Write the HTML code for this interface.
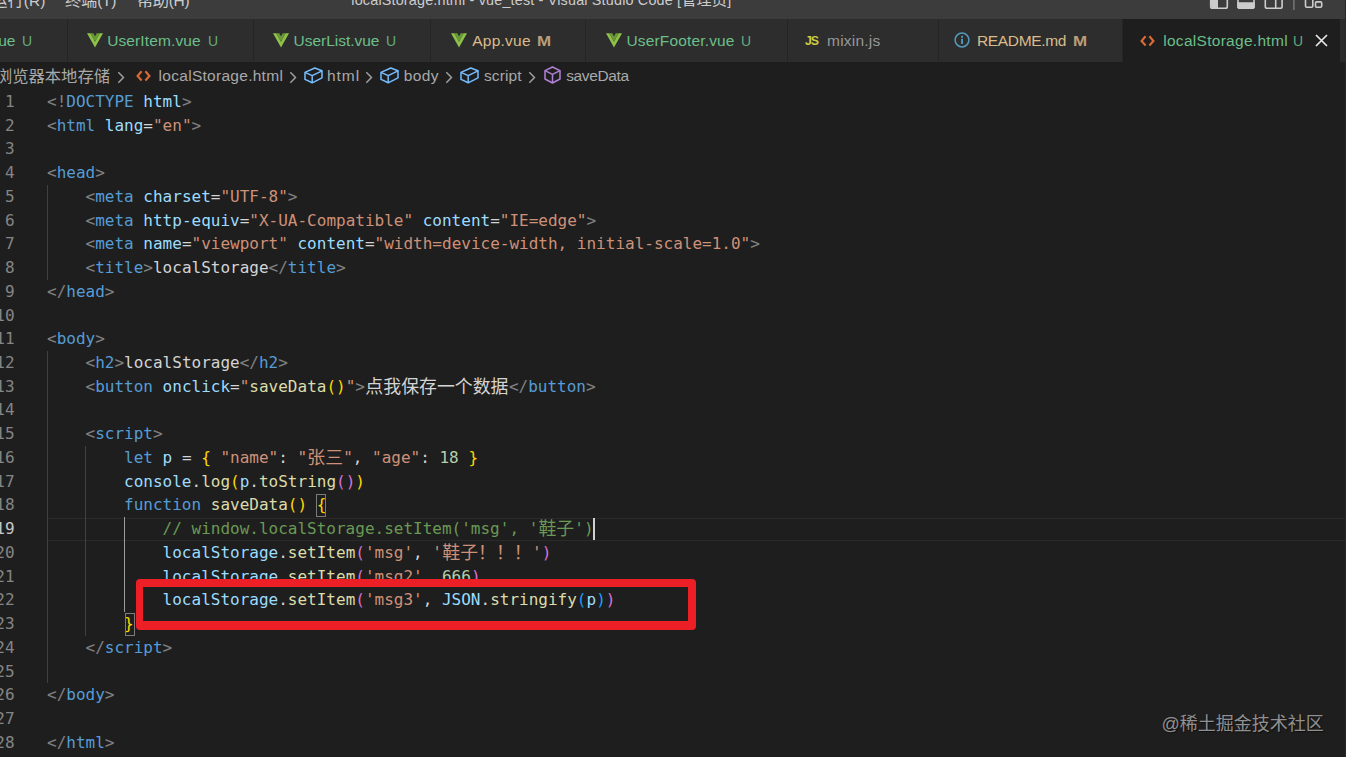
<!DOCTYPE html>
<html lang="zh-CN">
<head>
<meta charset="UTF-8">
<title>localStorage.html - vue_test - Visual Studio Code</title>
<style>
*{box-sizing:border-box}
html,body{margin:0;padding:0}
body{width:1346px;height:757px;overflow:hidden;background:#1e1e1e;position:relative;
 font-family:"Liberation Sans","Noto Sans CJK SC",sans-serif;color:#d4d4d4}
.abs{position:absolute}
i.k{font-style:normal;font-size:1.052em}
#bc i.k{position:relative;top:0.8px}
/* title bar */
#title{position:absolute;left:0;top:0;width:1346px;height:18.5px;background:#3c3c3c;overflow:hidden}
#title span{position:absolute;top:-11.2px;line-height:22px;font-size:15.5px;color:#cccccc;white-space:nowrap}
#title span.tt{font-size:14.4px;top:-11.2px}
/* tabs */
#tabs{position:absolute;left:0;top:18.5px;width:1340px;height:43px;background:#252526}
#tabstrip{position:absolute;left:1340px;top:18.5px;width:6px;height:43px;background:#2b2b2b}
.tab{position:absolute;top:0;height:43px;background:#2d2d2d;border-right:1px solid #252526}
.tab.on{background:#1e1e1e;border-right:none}
.tab span{position:absolute;top:-0.1px;line-height:45px;font-size:15.5px;white-space:nowrap}
.tab span.js{color:#cbcb41;font-weight:bold;font-size:12.4px;line-height:46px}
.U{color:#6cbf8a}.M{color:#dcbb8a}.N{color:#979797}
.tab span.st{font-size:15.5px;opacity:.88;transform:scaleX(.9);transform-origin:0 50%}
.tab span.M.st{font-size:15px;font-weight:bold;opacity:.8;transform:scaleX(1.13);top:-0.4px}
.tab svg{position:absolute}
/* breadcrumb */
#bc{position:absolute;left:0;top:62px;width:1346px;height:27px}
#bc span{position:absolute;top:-1px;line-height:29px;font-size:15.5px;color:#a9a9a9;white-space:nowrap}
#bc svg{position:absolute}
/* editor */
.ln,.cl{position:absolute;height:23.73px;line-height:23.73px;white-space:pre;
 font-family:"DejaVu Sans Mono","Liberation Mono","Noto Sans CJK SC",monospace;font-size:16px;letter-spacing:0}
.ln{left:-30px;width:44.6px;text-align:right;color:#858585}
.ln.act{color:#c6c6c6}
.cl{left:47.00px;color:#d4d4d4}
.cj{display:inline-block;text-align:center;letter-spacing:0;font-size:17.9px;line-height:1;vertical-align:baseline;position:relative;top:0.8px;font-family:"Noto Sans CJK SC",sans-serif}
.ig{position:absolute;width:1px;background:#404040}
.iga{background:#9c9c9c}
.g{color:#808080}
.t{color:#569cd6}
.a{color:#9cdcfe}
.s{color:#ce9178}
.w{color:#d4d4d4}
.f{color:#dcdcaa}
.n{color:#b5cea8}
.c{color:#6a9955}
.y{color:#ffd700}
.p{color:#da70d6}
.b{color:#179fff}
#curline{position:absolute;left:47px;top:518px;width:1299px;height:22.9px;border-top:1.6px solid #2a2a2a;border-bottom:1.6px solid #2a2a2a}
#cursor{position:absolute;width:2px;background:#d0d0d0}
.bm{position:absolute;border:1px solid #7c7c7c}
#red{position:absolute;left:135.5px;top:579px;width:560.8px;height:51.3px;border:solid #ec1f27;border-width:8.3px 8.7px 9px 7.5px;border-radius:4px}
#wm{position:absolute;left:1161.6px;top:710.4px;font-size:18px;line-height:28px;color:#909090;text-shadow:1px 1px 1px rgba(0,0,0,.55);white-space:nowrap;font-family:"Liberation Sans","Noto Sans CJK SC",sans-serif}
</style>
</head>
<body>
<div id="title">
<span id="m0" class="" style="left:-8.80px;letter-spacing:0.000px"><i class="k">运行</i>(R)</span>
<span id="m1" class="" style="left:65.00px;letter-spacing:-0.225px"><i class="k">终端</i>(T)</span>
<span id="m2" class="" style="left:136.90px;letter-spacing:-0.360px"><i class="k">帮助</i>(H)</span>
<span id="m3" class="tt" style="left:351.30px;letter-spacing:0.170px">localStorage.html - vue_test - Visual Studio Code [<i class="k">管理员</i>]</span>
 <svg class="abs" style="left:1205px;top:-8px" width="125" height="20" viewBox="0 0 125 20">
  <g fill="none" stroke="#cccccc" stroke-width="1.6">
   <rect x="5.7" y="1.8" width="16.6" height="14.4" rx="1.8"/>
   <rect x="33" y="1.8" width="16" height="14.4" rx="1.8"/>
   <rect x="60.3" y="1.8" width="16.8" height="14.4" rx="1.8"/>
   <path d="M70.7 2v14" />
   <path d="M88.9 4v14" stroke="#8a8a8a" stroke-width="1.1"/>
   <rect x="100.5" y="1.8" width="7.3" height="13.4" rx="1.2"/>
   <rect x="110.5" y="9.9" width="6.2" height="5.3" rx="1.2"/>
  </g>
  <path d="M5 2h8v15H6.5z" fill="#cccccc"/>
  <path d="M32.3 10.2h17.4v5.3l-1.5 1.5H33.8l-1.5-1.5z" fill="#cccccc"/>
 </svg>
</div>
<div id="tabs">
<div class="tab" style="left:0.0px;width:67.5px"><span id="t0" class="U" style="left:-1.80px;letter-spacing:0.000px">ue</span><span id="s0" class="U st" style="left:21.90px;letter-spacing:0.000px">U</span></div>
<div class="tab" style="left:67.5px;width:186.0px"><svg style="left:19.5px;top:14.5px" width="16" height="14.6" viewBox="0 0 16 14" preserveAspectRatio="none"><path d="M0 0.3h3.4L8 8.4 12.6 0.3H16L8 13.8z" fill="#8dc149"/><path d="M3.4 0.3h2.9L8 3.4 9.7 0.3h2.9L8 8.4z" fill="#6a9a35"/></svg><span id="t1" class="U" style="left:39.70px;letter-spacing:0.115px">UserItem.vue</span><span id="s1" class="U st" style="left:140.30px;letter-spacing:0.000px">U</span></div>
<div class="tab" style="left:253.5px;width:177.0px"><svg style="left:19.8px;top:14.5px" width="16" height="14.6" viewBox="0 0 16 14" preserveAspectRatio="none"><path d="M0 0.3h3.4L8 8.4 12.6 0.3H16L8 13.8z" fill="#8dc149"/><path d="M3.4 0.3h2.9L8 3.4 9.7 0.3h2.9L8 8.4z" fill="#6a9a35"/></svg><span id="t2" class="U" style="left:40.00px;letter-spacing:-0.016px">UserList.vue</span><span id="s2" class="U st" style="left:132.20px;letter-spacing:0.000px">U</span></div>
<div class="tab" style="left:430.5px;width:155.5px"><svg style="left:20.5px;top:14.5px" width="16" height="14.6" viewBox="0 0 16 14" preserveAspectRatio="none"><path d="M0 0.3h3.4L8 8.4 12.6 0.3H16L8 13.8z" fill="#8dc149"/><path d="M3.4 0.3h2.9L8 3.4 9.7 0.3h2.9L8 8.4z" fill="#6a9a35"/></svg><span id="t3" class="M" style="left:41.70px;letter-spacing:0.240px">App.vue</span><span id="s3" class="M st" style="left:106.00px;letter-spacing:0.000px">M</span></div>
<div class="tab" style="left:586.0px;width:201.5px"><svg style="left:20.2px;top:14.5px" width="16" height="14.6" viewBox="0 0 16 14" preserveAspectRatio="none"><path d="M0 0.3h3.4L8 8.4 12.6 0.3H16L8 13.8z" fill="#8dc149"/><path d="M3.4 0.3h2.9L8 3.4 9.7 0.3h2.9L8 8.4z" fill="#6a9a35"/></svg><span id="t4" class="U" style="left:40.50px;letter-spacing:0.152px">UserFooter.vue</span><span id="s4" class="U st" style="left:155.40px;letter-spacing:0.000px">U</span></div>
<div class="tab" style="left:787.5px;width:151.5px"><span id="tjs" class="js" style="left:17.40px;letter-spacing:-1.000px">JS</span><span id="t5" class="N" style="left:39.60px;letter-spacing:0.206px">mixin.js</span></div>
<div class="tab" style="left:939.0px;width:184.0px"><svg style="left:14.6px;top:13.5px" width="16" height="16" viewBox="0 0 16 16"><circle cx="8" cy="8" r="6.9" fill="none" stroke="#519aba" stroke-width="1.5"/><rect x="7.1" y="6.8" width="1.9" height="5.2" fill="#519aba"/><rect x="7.1" y="3.8" width="1.9" height="1.9" fill="#519aba"/></svg><span id="t6" class="M" style="left:38.00px;letter-spacing:-0.338px">README.md</span><span id="s6" class="M st" style="left:134.00px;letter-spacing:0.000px">M</span></div>
<div class="tab on" style="left:1123.0px;width:217.0px"><svg style="left:17.1px;top:16.5px" width="15" height="11.8" viewBox="0 0 15 11" preserveAspectRatio="none"><path d="M5.6 1.2L1.6 5.5l4 4.3M9.4 1.2l4 4.3-4 4.3" fill="none" stroke="#dd6a35" stroke-width="2.1"/></svg><span id="t7" class="U" style="left:40.20px;letter-spacing:0.292px">localStorage.html</span><span id="s7" class="U st" style="left:170.30px;letter-spacing:0.000px">U</span><svg style="left:192.0px;top:15.2px" width="13" height="13" viewBox="0 0 13 13"><path d="M1 1l11 11M12 1L1 12" fill="none" stroke="#e8e8e8" stroke-width="1.7"/></svg></div>
</div>
<div id="tabstrip"></div>
<div class="abs" style="left:1344.6px;top:0;width:1.4px;height:757px;background:#282828;z-index:5"></div>
<div id="bc">
<span id="b0" class="" style="left:-4.10px;letter-spacing:0.000px"><i class="k">浏览器本地存储</i></span>
<svg style="left:116.9px;top:8.5px" width="9" height="13" viewBox="0 0 9 13"><path d="M1.3 1.2l5.2 5.3-5.2 5.3" fill="none" stroke="#a0a0a0" stroke-width="1.45"/></svg>
<svg style="left:135.8px;top:8.0px" width="15" height="11.8" viewBox="0 0 15 11" preserveAspectRatio="none"><path d="M5.6 1.2L1.6 5.5l4 4.3M9.4 1.2l4 4.3-4 4.3" fill="none" stroke="#dd6a35" stroke-width="2.1"/></svg>
<span id="b1" class="" style="left:158.60px;letter-spacing:0.281px">localStorage.html</span>
<svg style="left:288.9px;top:8.5px" width="9" height="13" viewBox="0 0 9 13"><path d="M1.3 1.2l5.2 5.3-5.2 5.3" fill="none" stroke="#a0a0a0" stroke-width="1.45"/></svg>
<svg style="left:303.7px;top:4.5px" width="19" height="17" viewBox="0 0 19 17"><g fill="none" stroke="#75beff" stroke-width="1.5" stroke-linejoin="round"><path d="M1 5.4L10.8 1 18 3.8v7L8.2 15.8 1 12.4z"/><path d="M1 5.4l7.2 3.2L18 3.8M8.2 8.6v7.2"/></g></svg>
<span id="b2" class="" style="left:327.10px;letter-spacing:0.900px">html</span>
<svg style="left:364.9px;top:8.5px" width="9" height="13" viewBox="0 0 9 13"><path d="M1.3 1.2l5.2 5.3-5.2 5.3" fill="none" stroke="#a0a0a0" stroke-width="1.45"/></svg>
<svg style="left:380.0px;top:4.5px" width="19" height="17" viewBox="0 0 19 17"><g fill="none" stroke="#75beff" stroke-width="1.5" stroke-linejoin="round"><path d="M1 5.4L10.8 1 18 3.8v7L8.2 15.8 1 12.4z"/><path d="M1 5.4l7.2 3.2L18 3.8M8.2 8.6v7.2"/></g></svg>
<span id="b3" class="" style="left:403.70px;letter-spacing:0.420px">body</span>
<svg style="left:444.9px;top:8.5px" width="9" height="13" viewBox="0 0 9 13"><path d="M1.3 1.2l5.2 5.3-5.2 5.3" fill="none" stroke="#a0a0a0" stroke-width="1.45"/></svg>
<svg style="left:460.3px;top:4.5px" width="19" height="17" viewBox="0 0 19 17"><g fill="none" stroke="#75beff" stroke-width="1.5" stroke-linejoin="round"><path d="M1 5.4L10.8 1 18 3.8v7L8.2 15.8 1 12.4z"/><path d="M1 5.4l7.2 3.2L18 3.8M8.2 8.6v7.2"/></g></svg>
<span id="b4" class="" style="left:484.00px;letter-spacing:0.108px">script</span>
<svg style="left:527.9px;top:8.5px" width="9" height="13" viewBox="0 0 9 13"><path d="M1.3 1.2l5.2 5.3-5.2 5.3" fill="none" stroke="#a0a0a0" stroke-width="1.45"/></svg>
<svg style="left:543.7px;top:3.5px" width="17" height="18" viewBox="0 0 17 18"><g fill="none" stroke="#b180d7" stroke-width="1.5" stroke-linejoin="round"><path d="M8.5 1L16 4.6v8.4L8.5 17 1 13V4.6z"/><path d="M1 4.6l7.5 3.8 7.5-3.8M8.5 8.4V17"/></g></svg>
<span id="b5" class="" style="left:566.20px;letter-spacing:-0.360px">saveData</span>
</div>
<div id="curline"></div>
<div class="ig" style="left:47.0px;top:184.9px;height:94.9px"></div>
<div class="ig" style="left:47.0px;top:351.0px;height:332.2px"></div>
<div class="ig" style="left:85.1px;top:445.9px;height:189.8px"></div>
<div class="ig iga" style="left:124.0px;top:517.1px;height:94.9px"></div>
<div class="ln" style="top:90.00px">1</div>
<div class="cl" style="top:90.00px"><span class="g">&lt;!</span><span class="t">DOCTYPE</span> <span class="a">html</span><span class="g">&gt;</span></div>
<div class="ln" style="top:113.73px">2</div>
<div class="cl" style="top:113.73px"><span class="g">&lt;</span><span class="t">html</span> <span class="a">lang</span>=<span class="s">&quot;en&quot;</span><span class="g">&gt;</span></div>
<div class="ln" style="top:137.46px">3</div>
<div class="ln" style="top:161.19px">4</div>
<div class="cl" style="top:161.19px"><span class="g">&lt;</span><span class="t">head</span><span class="g">&gt;</span></div>
<div class="ln" style="top:184.92px">5</div>
<div class="cl" style="top:184.92px">    <span class="g">&lt;</span><span class="t">meta</span> <span class="a">charset</span>=<span class="s">&quot;UTF-8&quot;</span><span class="g">&gt;</span></div>
<div class="ln" style="top:208.65px">6</div>
<div class="cl" style="top:208.65px">    <span class="g">&lt;</span><span class="t">meta</span> <span class="a">http-equiv</span>=<span class="s">&quot;X-UA-Compatible&quot;</span> <span class="a">content</span>=<span class="s">&quot;IE=edge&quot;</span><span class="g">&gt;</span></div>
<div class="ln" style="top:232.38px">7</div>
<div class="cl" style="top:232.38px">    <span class="g">&lt;</span><span class="t">meta</span> <span class="a">name</span>=<span class="s">&quot;viewport&quot;</span> <span class="a">content</span>=<span class="s">&quot;width=device-width, initial-scale=1.0&quot;</span><span class="g">&gt;</span></div>
<div class="ln" style="top:256.11px">8</div>
<div class="cl" style="top:256.11px">    <span class="g">&lt;</span><span class="t">title</span><span class="g">&gt;</span>localStorage<span class="g">&lt;/</span><span class="t">title</span><span class="g">&gt;</span></div>
<div class="ln" style="top:279.84px">9</div>
<div class="cl" style="top:279.84px"><span class="g">&lt;/</span><span class="t">head</span><span class="g">&gt;</span></div>
<div class="ln" style="top:303.57px">10</div>
<div class="ln" style="top:327.30px">11</div>
<div class="cl" style="top:327.30px"><span class="g">&lt;</span><span class="t">body</span><span class="g">&gt;</span></div>
<div class="ln" style="top:351.03px">12</div>
<div class="cl" style="top:351.03px">    <span class="g">&lt;</span><span class="t">h2</span><span class="g">&gt;</span>localStorage<span class="g">&lt;/</span><span class="t">h2</span><span class="g">&gt;</span></div>
<div class="ln" style="top:374.76px">13</div>
<div class="cl" style="top:374.76px">    <span class="g">&lt;</span><span class="t">button</span> <span class="a">onclick</span>=<span class="s">&quot;</span><span class="f">saveData</span><span class="y">()</span><span class="s">&quot;</span><span class="g">&gt;</span><span class="w"><span class="cj" style="width:144.00px">点我保存一个数据</span></span><span class="g">&lt;/</span><span class="t">button</span><span class="g">&gt;</span></div>
<div class="ln" style="top:398.49px">14</div>
<div class="ln" style="top:422.22px">15</div>
<div class="cl" style="top:422.22px">    <span class="g">&lt;</span><span class="t">script</span><span class="g">&gt;</span></div>
<div class="ln" style="top:445.95px">16</div>
<div class="cl" style="top:445.95px">        <span class="t">let</span> <span class="a">p</span> = <span class="y">{</span> <span class="s">&quot;name&quot;</span>: <span class="s">&quot;<span class="cj" style="width:36.00px">张三</span>&quot;</span>, <span class="s">&quot;age&quot;</span>: <span class="n">18</span> <span class="y">}</span></div>
<div class="ln" style="top:469.68px">17</div>
<div class="cl" style="top:469.68px">        <span class="a">console</span>.<span class="f">log</span><span class="y">(</span><span class="a">p</span>.<span class="f">toString</span><span class="p">()</span><span class="y">)</span></div>
<div class="ln" style="top:493.41px">18</div>
<div class="cl" style="top:493.41px">        <span class="t">function</span> <span class="f">saveData</span><span class="y">()</span> <span class="y">{</span></div>
<div class="ln act" style="top:517.14px">19</div>
<div class="cl" style="top:517.14px">            <span class="c">// window.localStorage.setItem(&#x27;msg&#x27;, &#x27;<span class="cj" style="width:36.00px">鞋子</span>&#x27;)</span></div>
<div class="ln" style="top:540.87px">20</div>
<div class="cl" style="top:540.87px">            <span class="a">localStorage</span>.<span class="f">setItem</span><span class="p">(</span><span class="s">&#x27;msg&#x27;</span>, <span class="s">&#x27;<span class="cj" style="width:90.00px">鞋子！！！</span>&#x27;</span><span class="p">)</span></div>
<div class="ln" style="top:564.60px">21</div>
<div class="cl" style="top:564.60px">            <span class="a">localStorage</span>.<span class="f">setItem</span><span class="p">(</span><span class="s">&#x27;msg2&#x27;</span>, <span class="n">666</span><span class="p">)</span></div>
<div class="ln" style="top:588.33px">22</div>
<div class="cl" style="top:588.33px">            <span class="a">localStorage</span>.<span class="f">setItem</span><span class="p">(</span><span class="s">&#x27;msg3&#x27;</span>, <span class="a">JSON</span>.<span class="f">stringify</span><span class="b">(</span><span class="a">p</span><span class="b">)</span><span class="p">)</span></div>
<div class="ln" style="top:612.06px">23</div>
<div class="cl" style="top:612.06px">        <span class="y">}</span></div>
<div class="ln" style="top:635.79px">24</div>
<div class="cl" style="top:635.79px">    <span class="g">&lt;/</span><span class="t">script</span><span class="g">&gt;</span></div>
<div class="ln" style="top:659.52px">25</div>
<div class="ln" style="top:683.25px">26</div>
<div class="cl" style="top:683.25px"><span class="g">&lt;/</span><span class="t">body</span><span class="g">&gt;</span></div>
<div class="ln" style="top:706.98px">27</div>
<div class="ln" style="top:730.71px">28</div>
<div class="cl" style="top:730.71px"><span class="g">&lt;/</span><span class="t">html</span><span class="g">&gt;</span></div>
<div class="bm" style="left:316px;top:494.3px;width:10.3px;height:23px"></div>
<div class="bm" style="left:124.8px;top:612.8px;width:10.3px;height:23px"></div>
<div id="cursor" style="left:593px;top:518.2px;height:21.6px"></div>
<div id="red"></div>
<div id="wm">@稀土掘金技术社区</div>
</body>
</html>
